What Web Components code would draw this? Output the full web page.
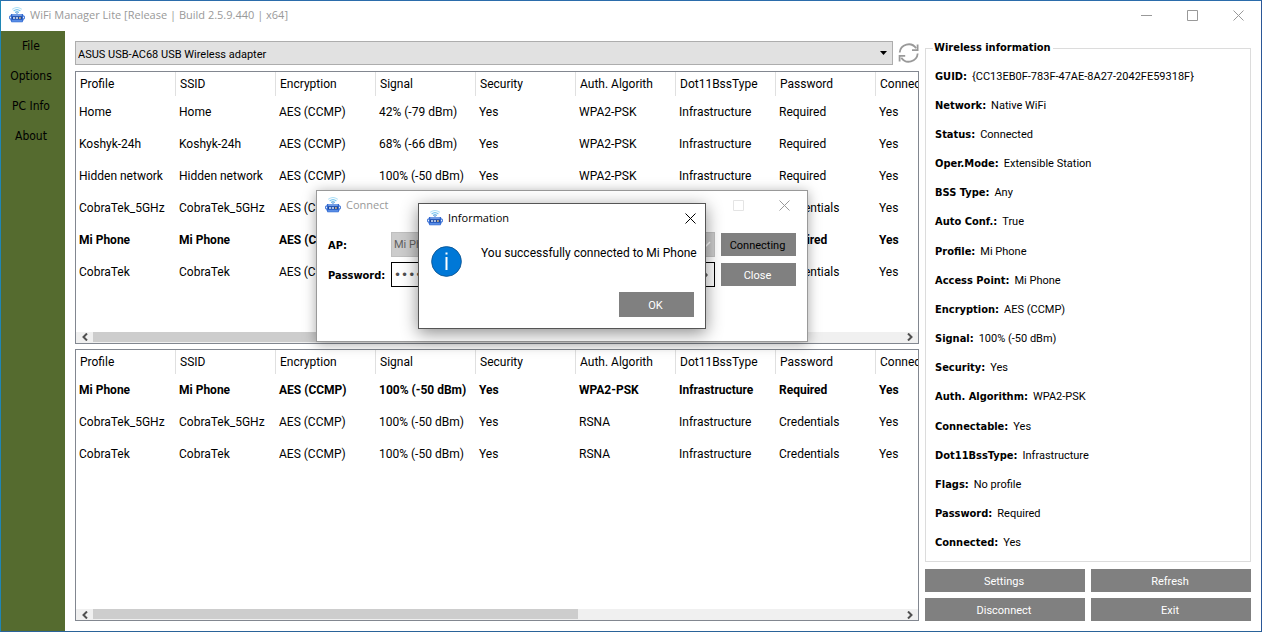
<!DOCTYPE html>
<html lang="en">
<head>
<meta charset="utf-8">
<title>WiFi Manager Lite</title>
<style>
  html, body { margin: 0; height: 100%; }
  body { background: #fff; color: #000; font: 11px/14px Roboto, "Open Sans", sans-serif; }
</style>
</head>
<body>
<wifi-app></wifi-app>

<template id="app-icon-t">
  <style>
    :host { display: block; width: 16px; height: 16px; flex: none; }
    svg { display: block; width: 100%; height: 100%; }
  </style>
  <svg viewBox="0 0 16 16" aria-hidden="true">
    <path d="M3.200 2.400 Q8 -1.400 12.800 2.400" fill="none" stroke="#b5e2f7" stroke-width="1.100"/>
    <path d="M4.600 4 Q8 1.200 11.400 4" fill="none" stroke="#7cc8f0" stroke-width="1.100"/>
    <path d="M6.200 5.500 Q8 4 9.800 5.500" fill="none" stroke="#4fa3dc" stroke-width="1.100"/>
    <path d="M8 5.500V8" stroke="#5f9ae0" stroke-width="1.200"/>
    <path d="M2.200 7h11.600l.8 1.600-.8 2.400 1 1.600-1.300 2.600H2.500l-1.300-2.600 1-1.600L1.400 8.600z" fill="#2f67d0"/>
    <path d="M1.800 9.200H.6v2.600h1.300M14.200 9.200h1.200v2.600h-1.300" fill="none" stroke="#3b72d4" stroke-width="1"/>
    <path d="M3.200 8h9.600" stroke="#a9c8f4" stroke-width="1.100"/>
    <path d="M3 9.600h10v2.600H3z" fill="#1d4596"/>
    <path d="M4 10.900h2M6.800 10.900h2.200" stroke="#dce9ff" stroke-width="1.500"/>
    <path d="M10 10.900h1.800" stroke="#e8c48a" stroke-width="1.500"/>
    <path d="M2.800 13.900h10.400" stroke="#6c9eee" stroke-width="1.200"/>
  </svg>
</template>

<template id="title-bar-t">
  <style>
    :host { display: flex; align-items: center; box-sizing: border-box; height: 30px; flex: none; padding: 0 0 2px 8px; gap: 5px;
            color: #999; font: 11px/16px "Open Sans", sans-serif; }
    .text { flex: 1; white-space: nowrap; }
    button { width: 46px; height: 28px; padding: 0; border: 0; background: none; color: inherit;
             display: grid; place-items: center; }
    .max:disabled { color: #e4e4e4; }
    .hidden { display: none; }
    svg { display: block; width: 11px; height: 11px; fill: none; stroke: currentColor; }
    .controls { display: flex; }
  </style>
  <app-icon></app-icon>
  <span class="text"><slot></slot></span>
  <div class="controls">
    <button class="min" type="button" aria-label="Minimize"><svg viewBox="0 0 11 11"><path d="M0 5.500h11"/></svg></button>
    <button class="max" type="button" aria-label="Maximize"><svg viewBox="0 0 11 11"><path d="M.5.500h10v10H.5z"/></svg></button>
    <button class="close" type="button" aria-label="Close"><svg viewBox="0 0 11 11"><path d="M.5.500l10 10M10.500.5l-10 10"/></svg></button>
  </div>
</template>

<template id="push-button-t">
  <style>
    :host { display: block; height: 23px; }
    button { width: 100%; height: 100%; padding: 2px 2px 0 0; border: 0; background: #808080; color: var(--ink, #fff);
             font: 11px/14px Roboto, sans-serif; }
  </style>
  <button type="button"><slot></slot></button>
</template>

<template id="side-menu-t">
  <style>
    :host { display: block; width: 64px; flex: none; background: #556b2f; }
    ul { margin: 0; padding: 0; list-style: none; }
    a { display: block; height: 30px; line-height: 30px; padding-right: 4px; text-align: center; color: #000;
        text-decoration: none; font-family: "DejaVu Sans Condensed", "DejaVu Sans", sans-serif; font-size: 12px; }
  </style>
  <nav><ul>
    <li><a href="#file">File</a></li>
    <li><a href="#options">Options</a></li>
    <li><a href="#pc">PC Info</a></li>
    <li><a href="#about">About</a></li>
  </ul></nav>
</template>

<template id="adapter-bar-t">
  <style>
    :host { display: flex; align-items: center; gap: 5px; height: 24px; }
    .box { position: relative; flex: 1; height: 24px; }
    select { appearance: none; display: block; box-sizing: border-box; width: 100%; height: 24px; margin: 0; padding: 3px 2px 0;
             border: 1px solid #adadad; border-radius: 0; background: #e1e1e1; color: #000; font: 11px/14px Roboto, sans-serif; }
    .arrow { position: absolute; right: 6px; top: 10px; width: 7px; height: 4px; pointer-events: none; }
    button { width: 21px; height: 22px; padding: 0; border: 0; background: none; color: #999; }
    button svg { display: block; width: 21px; height: 22px; }
  </style>
  <div class="box">
    <select aria-label="Wireless adapter"><option>ASUS USB-AC68 USB Wireless adapter</option></select>
    <svg class="arrow" viewBox="0 0 7 4"><path d="M0 0h7L3.500 4z"/></svg>
  </div>
  <button type="button" aria-label="Rescan adapters">
    <svg viewBox="0 0 21 22" fill="none" stroke="currentColor" stroke-width="1.800">
      <path d="M1.700 10.500a9 9 0 0 1 16.400-4.200"/><path d="M19.600 2.500v5.600h-5.600"/>
      <path d="M19.700 11.500a9 9 0 0 1-16.400 4.200"/><path d="M1.600 19.500v-5.600h5.600"/>
    </svg>
  </button>
</template>

<template id="network-table-t">
  <style>
    :host { display: flex; flex-direction: column; box-sizing: border-box; min-height: 0; min-width: 0;
            border: 1px solid #828790; background: #fff; }
    .view { flex: 1; min-height: 0; overflow: hidden; }
    table { width: 900px; table-layout: fixed; border-collapse: separate; border-spacing: 0;
            font: 12px/16px Roboto, sans-serif; }
    th, td { box-sizing: border-box; padding: 0 0 0 3px; text-align: left; white-space: nowrap; font-weight: 400; }
    th { height: 24px; padding-left: 4px; border-right: 1px solid #e0e0e0; }
    td { height: 32px; }
    .current td { font-weight: 700; }
    .scroll { display: flex; height: 11px; flex: none; background: #f0f0f0; }
    .scroll button { width: 17px; padding: 0; border: 0; background: none; display: grid; place-items: center; }
    .scroll svg { display: block; width: 6px; height: 8px; fill: none; stroke: #505050; stroke-width: 2; }
    .track { flex: 1; }
    .thumb { width: 60%; height: 10px; background: #cdcdcd; }
  </style>
  <div class="view"><table><thead><tr></tr></thead><tbody></tbody></table></div>
  <div class="scroll">
    <button type="button" aria-label="Scroll left"><svg viewBox="0 0 6 8"><path d="M5 .5 1.500 4 5 7.500"/></svg></button>
    <div class="track"><div class="thumb"></div></div>
    <button type="button" aria-label="Scroll right"><svg viewBox="0 0 6 8"><path d="M1 .5 4.500 4 1 7.500"/></svg></button>
  </div>
</template>

<template id="info-panel-t">
  <style>
    :host { display: flex; flex-direction: column; min-height: 0; }
    fieldset { flex: 1; box-sizing: border-box; min-width: 0; min-height: 0; margin: 0; padding: 7px 9px 3px; border: 1px solid #dcdcdc; }
    legend { margin-left: -2px; padding: 0 2px 0 1px; line-height: 14px; }
    legend, dt { font-family: "DejaVu Sans Condensed", "DejaVu Sans", sans-serif; font-weight: 700; font-size: 11px; }
    dl { margin: 0; height: 100%; display: flex; flex-direction: column; }
    dl div { flex: 1; display: flex; align-items: center; gap: 5px; }
    dd { margin: 0; }
  </style>
  <fieldset><legend>Wireless information</legend><dl></dl></fieldset>
</template>

<template id="connect-window-t">
  <style>
    :host { display: block; box-sizing: border-box; width: 492px; height: 152px; border: 1px solid #999; background: #fff;
            box-shadow: 0 2px 12px rgba(0,0,0,.35); }
    form { display: grid; grid-template-columns: 57px 1fr 75px; column-gap: 6px; row-gap: 5px; align-items: center; padding: 11px 11px 0; }
    label { padding-top: 2px; white-space: nowrap; font-family: "DejaVu Sans Condensed", "DejaVu Sans", sans-serif; font-weight: 700; font-size: 11px; }
    .field { position: relative; }
    select, input { appearance: none; display: block; box-sizing: border-box; width: 100%; height: 25px; margin: 0; padding: 0 2px;
                    border: 1px solid #bfbfbf; border-radius: 0; background: #ccc; color: #606060; font: 11px/14px Roboto, sans-serif; }
    select:disabled { opacity: 1; }
    input { border-color: #000; background: #fff; color: #505050; font-family: "DejaVu Sans", sans-serif; font-size: 12px; }
    svg { position: absolute; right: 4px; top: 8px; width: 10px; height: 8px; }
    .eye { right: 7px; width: 14px; height: 10px; }
    .primary { --ink: #000; }
  </style>
  <title-bar maxoff>Connect</title-bar>
  <form>
    <label for="ap">AP:</label>
    <div class="field"><select id="ap" disabled><option>Mi Phone</option></select>
      <svg viewBox="0 0 10 8" fill="none" stroke="#fff" stroke-width="1.500"><path d="M1 2l4 4 4-4"/></svg></div>
    <push-button class="primary">Connecting</push-button>
    <label for="pw">Password:</label>
    <div class="field"><input id="pw" type="password" value="12345678">
      <svg class="eye" viewBox="0 0 14 10"><path d="M0 5Q7-4 14 5Q7 14 0 5z" fill="#606060"/></svg></div>
    <push-button>Close</push-button>
  </form>
</template>

<template id="message-window-t">
  <style>
    :host { display: flex; flex-direction: column; box-sizing: border-box; width: 288px; height: 126px; border: 1px solid #555; background: #fff;
            box-shadow: 0 4px 16px rgba(0,0,0,.45); }
    title-bar { color: #000; margin-right: -8px; }
    .body { display: flex; align-items: center; gap: 19px; padding: 11px 8px 0 12px; height: 32px; }
    .body svg { display: block; width: 31px; height: 31px; flex: none; }
    p { margin: 0 0 16px; font-size: 12px; line-height: 16px; white-space: nowrap; }
    push-button { width: 75px; height: 25px; margin: auto 11px 11px auto; }
  </style>
  <title-bar only-close>Information</title-bar>
  <div class="body">
    <svg viewBox="0 0 31 31" role="img" aria-label="Information">
      <circle cx="15.500" cy="15.500" r="14.900" fill="#0078d7" stroke="#0a4f8c" stroke-width=".8"/>
      <rect x="14.500" y="11" width="2" height="13" fill="#fff"/><rect x="14.500" y="6.500" width="2" height="2" fill="#fff"/>
    </svg>
    <p>You successfully connected to Mi Phone</p>
  </div>
  <push-button>OK</push-button>
</template>

<template id="wifi-app-t">
  <style>
    :host { display: flex; flex-direction: column; box-sizing: border-box; height: 100vh; min-height: 600px; overflow: hidden;
            border: 1px solid; border-color: #2b6cab #2b5797 #2a6399 #1f86b4; position: relative; }
    .work { flex: 1; display: flex; min-height: 0; }
    main { flex: 1; min-width: 0; display: flex; flex-direction: column; padding: 10px 6px 10px 10px; }
    adapter-bar { margin-bottom: 6px; }
    network-table { flex: 1; }
    network-table + network-table { margin-top: 5px; }
    aside { width: 326px; flex: none; display: flex; flex-direction: column; padding: 10px 10px 10px 0; }
    info-panel { flex: 1; }
    .actions { display: grid; grid-template-columns: 1fr 1fr; gap: 6px; margin-top: 7px; }
    connect-window { position: absolute; left: 315px; top: 189px; }
    message-window { position: absolute; left: 417px; top: 202px; }
  </style>
  <title-bar>WiFi Manager Lite [Release | Build 2.5.9.440 | x64]</title-bar>
  <div class="work">
    <side-menu></side-menu>
    <main>
      <adapter-bar></adapter-bar>
      <network-table source="saved"></network-table>
      <network-table source="visible"></network-table>
    </main>
    <aside>
      <info-panel></info-panel>
      <div class="actions">
        <push-button>Settings</push-button><push-button>Refresh</push-button>
        <push-button>Disconnect</push-button><push-button>Exit</push-button>
      </div>
    </aside>
  </div>
  <connect-window role="dialog" aria-label="Connect"></connect-window>
  <message-window role="alertdialog" aria-label="Information"></message-window>
</template>

<script>
const COLUMNS = ['Profile', 'SSID', 'Encryption', 'Signal', 'Security', 'Auth. Algorith', 'Dot11BssType', 'Password', 'Connectable'];
const network = (name, signal, auth, password) =>
  [name, name, 'AES (CCMP)', signal, 'Yes', auth, 'Infrastructure', password, 'Yes'];
const full = '100% (-50 dBm)';
const phone = network('Mi Phone', full, 'WPA2-PSK', 'Required');
const cobra5 = network('CobraTek_5GHz', full, 'RSNA', 'Credentials');
const cobra = network('CobraTek', full, 'RSNA', 'Credentials');
const NETWORKS = {
  saved: [
    network('Home', '42% (-79 dBm)', 'WPA2-PSK', 'Required'),
    network('Koshyk-24h', '68% (-66 dBm)', 'WPA2-PSK', 'Required'),
    network('Hidden network', full, 'WPA2-PSK', 'Required'),
    cobra5, phone, cobra
  ],
  visible: [phone, cobra5, cobra]
};
const INFO = [
  ['GUID', '{CC13EB0F-783F-47AE-8A27-2042FE59318F}'], ['Network', 'Native WiFi'], ['Status', 'Connected'],
  ['Oper.Mode', 'Extensible Station'], ['BSS Type', 'Any'], ['Auto Conf.', 'True'], ['Profile', 'Mi Phone'],
  ['Access Point', 'Mi Phone'], ['Encryption', 'AES (CCMP)'], ['Signal', full], ['Security', 'Yes'],
  ['Auth. Algorithm', 'WPA2-PSK'], ['Connectable', 'Yes'], ['Dot11BssType', 'Infrastructure'],
  ['Flags', 'No profile'], ['Password', 'Required'], ['Connected', 'Yes']
];

const make = (tag, text) => { const el = document.createElement(tag); el.textContent = text; return el; };

function define(name, setup) {
  customElements.define(name, class extends HTMLElement {
    connectedCallback() {
      if (this.shadowRoot) return;
      const root = this.attachShadow({ mode: 'open' });
      root.append(document.getElementById(name + '-t').content.cloneNode(true));
      if (setup) setup(this, root);
    }
  });
}

define('app-icon');
define('push-button');
define('title-bar', (host, root) => {
  if (host.hasAttribute('maxoff')) root.querySelector('.max').disabled = true;
  if (host.hasAttribute('only-close'))
    root.querySelectorAll('.min, .max').forEach(b => b.classList.add('hidden'));
});
define('side-menu');
define('adapter-bar');
define('network-table', (host, root) => {
  root.querySelector('thead tr').append(...COLUMNS.map(c => { const th = make('th', c); th.scope = 'col'; return th; }));
  root.querySelector('tbody').append(...NETWORKS[host.getAttribute('source')].map(row => {
    const tr = document.createElement('tr');
    if (row === phone) tr.className = 'current';
    tr.append(...row.map(v => make('td', v)));
    return tr;
  }));
});
define('info-panel', (host, root) => {
  root.querySelector('dl').append(...INFO.map(([k, v]) => {
    const row = document.createElement('div');
    row.append(make('dt', k + ':'), make('dd', v));
    return row;
  }));
});
define('connect-window');
define('message-window');
define('wifi-app');
</script>
</body>
</html>
